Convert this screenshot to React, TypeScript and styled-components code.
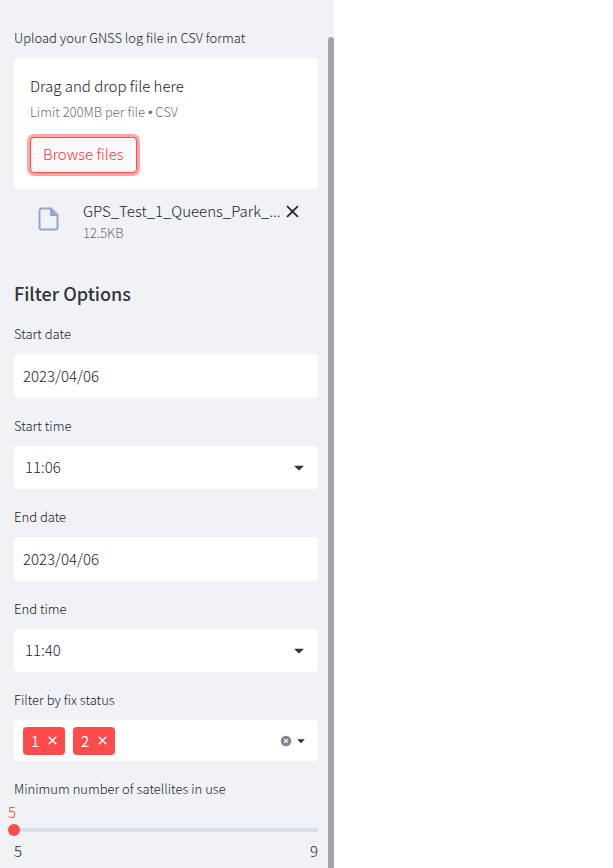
import React, { useState } from "react";
import styled, { createGlobalStyle } from "styled-components";

const ink = "#31333f";
const text = "#20222d";
const muted = "#6c6e79";
const accent = "#ff4b4b";

const GlobalStyle = createGlobalStyle`
  *, *::before, *::after { box-sizing: border-box; }
  body {
    margin: 0;
    background: #ffffff;
    color: ${text};
    font-family: "Source Sans Pro", "Noto Sans CJK SC", "Noto Sans", sans-serif;
    font-size: 15px;
    font-weight: 300;
    line-height: 20px;
  }
  button, input, select { font: inherit; color: inherit; }
`;

const Page = styled.div`
  display: flex;
  min-height: 100vh;
`;

const Sidebar = styled.aside`
  display: flex;
  flex: 0 0 334px;
  min-width: 0;
  background: #f0f2f6;
`;

const SidebarContent = styled.div`
  flex: 1;
  min-width: 0;
  padding: 28px 10px 0 14px;
`;

const ScrollThumb = styled.div`
  flex: none;
  width: 6px;
  margin-top: 37px;
  border-radius: 3px 3px 0 0;
  background: #a3a4ae;
`;

const Main = styled.main`
  flex: 1;
  min-width: 0;
`;

const Label = styled.label`
  display: block;
  margin-bottom: 10px;
  font-size: 13px;
  line-height: 20px;
`;

const Dropzone = styled.section`
  display: flex;
  flex-direction: column;
  align-items: flex-start;
  padding: 15px 16px 16px;
  border-radius: 4px;
  background: #ffffff;
`;

const DropTitle = styled.span`
  line-height: 26px;
`;

const Small = styled.span`
  font-size: 13px;
  line-height: 20px;
  color: ${muted};
`;

const DropHint = styled(Small)`
  line-height: 26px;
`;

const Bullet = styled.span`
  font-family: "Liberation Sans", sans-serif;
  line-height: 1;
`;

const BrowseButton = styled.button`
  height: 36px;
  margin: 12px 0 0;
  padding: 0 12px 2px;
  border: 1px solid ${accent};
  border-radius: 4px;
  background: #f9f9fb;
  color: #ff3636;
  box-shadow: 0 0 0 3px #ffa5a5;
`;

const FileRow = styled.div`
  display: flex;
  align-items: flex-start;
  padding: 12px 19px 0 23px;
`;

const FileIcon = styled.svg`
  flex: none;
  width: 24px;
  height: 24px;
  margin: 6px 22px 0 0;
`;

const FileInfo = styled.div`
  display: flex;
  flex: 1;
  flex-direction: column;
  min-width: 0;
  gap: 2px;
`;

const FileName = styled.span`
  white-space: nowrap;
`;

const IconButton = styled.button`
  display: flex;
  align-items: center;
  justify-content: center;
  flex: none;
  padding: 0;
  border: 0;
  background: none;
`;

const RemoveFile = styled(IconButton)`
  height: 20px;
  margin-left: 4px;
`;

const Heading = styled.h2`
  margin: 37px 0 18px;
  color: ${ink};
  font-size: 18px;
  line-height: 26px;
  font-weight: 500;
`;

const Field = styled.div`
  margin-bottom: 18px;
`;

const DateInput = styled.input`
  display: block;
  width: 100%;
  height: 44px;
  padding: 0 9px 2px;
  border: 0;
  border-radius: 4px;
  background: #ffffff;
`;

const SelectBox = styled.div`
  display: grid;
  align-items: center;
  height: 43px;
  border-radius: 4px;
  background: #ffffff;

  > * { grid-area: 1 / 1; }
  > svg { justify-self: end; margin-right: 14px; pointer-events: none; }
`;

const Select = styled.select`
  width: 100%;
  height: 100%;
  padding: 0 32px 2px 11px;
  border: 0;
  background: none;
  appearance: none;
`;

const MultiBox = styled.div`
  display: flex;
  align-items: center;
  gap: 8px;
  height: 41px;
  padding: 0 13px 0 9px;
  border-radius: 4px;
  background: #ffffff;
`;

const Tag = styled.span`
  display: flex;
  align-items: center;
  justify-content: space-between;
  width: 42px;
  height: 28px;
  padding: 0 8px;
  border-radius: 4px;
  background: ${accent};
  color: #ffffff;
  font-weight: 400;
`;

const MultiActions = styled.div`
  display: flex;
  align-items: center;
  gap: 5px;
  margin-left: auto;
`;

const SliderLabel = styled(Label)`
  margin-bottom: 3px;
`;

const SliderValue = styled.output`
  display: block;
  width: 12px;
  margin: 0 0 6px -8px;
  text-align: center;
  color: #ff3636;
`;

const Rail = styled.div`
  display: flex;
  align-items: center;
  height: 4px;
  border-radius: 2px;
  background: #d9dfe9;
`;

const Range = styled.input`
  flex: none;
  width: calc(100% + 12px);
  height: 12px;
  margin: 0 -6px;
  background: none;
  appearance: none;

  &::-webkit-slider-thumb {
    width: 12px;
    height: 12px;
    border-radius: 50%;
    background: ${accent};
    appearance: none;
  }
`;

const Bounds = styled.div`
  display: flex;
  justify-content: space-between;
  margin-top: 9px;
`;

function Caret({ size }: { size: number }) {
  return (
    <svg width={size} height={size} viewBox="0 0 10 10" aria-hidden="true">
      <path d="M.9 2.8h8.2c.4 0 .5.4.2.7L5.6 7.1c-.4.4-.8.4-1.2 0L.7 3.5c-.3-.3-.2-.7.2-.7z" fill={ink} />
    </svg>
  );
}

function Cross({ size, weight }: { size: number; weight: number }) {
  return (
    <svg width={size} height={size} viewBox="0 0 12 12" aria-hidden="true">
      <path d="M1 1l10 10M11 1L1 11" fill="none" stroke="currentColor" strokeWidth={weight} />
    </svg>
  );
}

function DateField({ id, label, initial }: { id: string; label: string; initial: string }) {
  return (
    <Field>
      <Label htmlFor={id}>{label}</Label>
      <DateInput id={id} type="text" defaultValue={initial} />
    </Field>
  );
}

function TimeField({ id, label, initial }: { id: string; label: string; initial: string }) {
  return (
    <Field>
      <Label htmlFor={id}>{label}</Label>
      <SelectBox>
        <Select id={id} defaultValue={initial}>
          <option>{initial}</option>
        </Select>
        <Caret size={10} />
      </SelectBox>
    </Field>
  );
}

export default function App() {
  const [statuses, setStatuses] = useState(["1", "2"]);
  const [satellites, setSatellites] = useState(5);

  return (
    <Page>
      <GlobalStyle />
      <Sidebar>
        <SidebarContent>
          <Label htmlFor="browse">Upload your GNSS log file in CSV format</Label>
          <Dropzone>
            <DropTitle>Drag and drop file here</DropTitle>
            <DropHint>
              Limit 200MB per file <Bullet>•</Bullet> CSV
            </DropHint>
            <BrowseButton id="browse" type="button">Browse files</BrowseButton>
          </Dropzone>
          <FileRow>
            <FileIcon viewBox="0 0 24 24" aria-hidden="true">
              <path
                d="M14 1.5H4.5a2 2 0 0 0-2 2v17a2 2 0 0 0 2 2h14a2 2 0 0 0 2-2V8z"
                fill="none"
                stroke="#98a8c9"
                strokeWidth="2"
                strokeLinejoin="round"
              />
              <path d="M13 1.5V9h7.5z" fill="#98a8c9" />
            </FileIcon>
            <FileInfo>
              <FileName>GPS_Test_1_Queens_Park_...</FileName>
              <Small>12.5KB</Small>
            </FileInfo>
            <RemoveFile type="button" aria-label="Remove file">
              <Cross size={13} weight={1.5} />
            </RemoveFile>
          </FileRow>

          <Heading>Filter Options</Heading>
          <DateField id="start-date" label="Start date" initial="2023/04/06" />
          <TimeField id="start-time" label="Start time" initial="11:06" />
          <DateField id="end-date" label="End date" initial="2023/04/06" />
          <TimeField id="end-time" label="End time" initial="11:40" />

          <Field>
            <Label as="div" id="fix-status">Filter by fix status</Label>
            <MultiBox role="group" aria-labelledby="fix-status">
              {statuses.map((status) => (
                <Tag key={status}>
                  {status}
                  <IconButton
                    type="button"
                    aria-label={`Remove ${status}`}
                    onClick={() => setStatuses(statuses.filter((s) => s !== status))}
                  >
                    <Cross size={9} weight={2} />
                  </IconButton>
                </Tag>
              ))}
              <MultiActions>
                <IconButton type="button" aria-label="Clear all" onClick={() => setStatuses([])}>
                  <svg width="12" height="12" viewBox="0 0 12 12" aria-hidden="true">
                    <circle cx="6" cy="6" r="5.3" fill="#808495" />
                    <path d="M4.2 4.2l3.6 3.6M7.8 4.2L4.2 7.8" stroke="#ffffff" strokeWidth="1.2" />
                  </svg>
                </IconButton>
                <IconButton type="button" aria-label="Open options">
                  <Caret size={8} />
                </IconButton>
              </MultiActions>
            </MultiBox>
          </Field>

          <SliderLabel htmlFor="satellites">Minimum number of satellites in use</SliderLabel>
          <SliderValue htmlFor="satellites">{satellites}</SliderValue>
          <Rail>
            <Range
              id="satellites"
              type="range"
              min={5}
              max={9}
              value={satellites}
              onChange={(event) => setSatellites(Number(event.target.value))}
            />
          </Rail>
          <Bounds>
            <span>5</span>
            <span>9</span>
          </Bounds>
        </SidebarContent>
        <ScrollThumb />
      </Sidebar>
      <Main />
    </Page>
  );
}
